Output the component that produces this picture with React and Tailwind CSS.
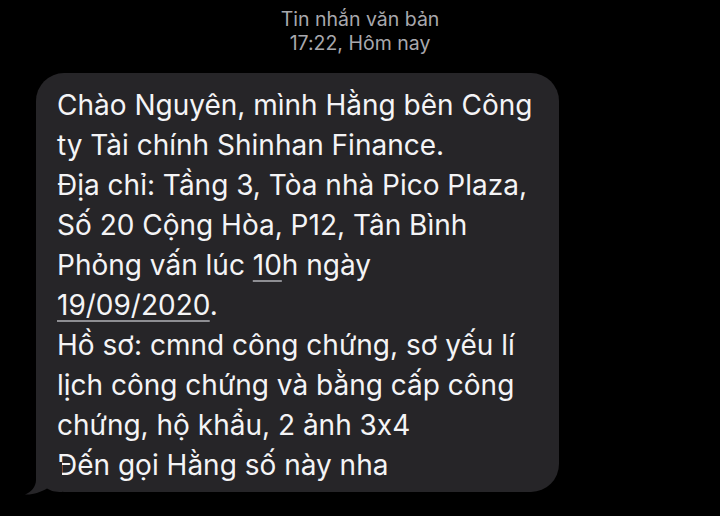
import React from "react";

export default function App() {
  const lines = [
    "Chào Nguyên, mình Hằng bên Công",
    "ty Tài chính Shinhan Finance.",
    "Địa chỉ: Tầng 3, Tòa nhà Pico Plaza,",
    "Số 20 Cộng Hòa, P12, Tân Bình",
  ];
  const lines2 = [
    "Hồ sơ: cmnd công chứng, sơ yếu lí",
    "lịch công chứng và bằng cấp công",
    "chứng, hộ khẩu, 2 ảnh 3x4",
    "Đến gọi Hằng số này nha",
  ];
  const ul = "underline decoration-[#8e8e93] decoration-[1.5px] underline-offset-[5px]";
  return (
    <div
      className="w-[720px] h-[516px] bg-black overflow-hidden [font-feature-settings:'calt'_0]"
      style={{ fontFamily: "Inter, 'Noto Sans', 'Liberation Sans', sans-serif" }}
    >
      <div className="pt-[7px] text-center text-[19.5px] leading-[24px] text-[#a8a8ad]">
        <div>Tin nhắn văn bản</div>
        <div>17:22, Hôm nay</div>
      </div>
      <div className="relative ml-[36px] mt-[18px] w-[523px] rounded-[28px] bg-[#262528] pl-[21px] pt-[12px] pb-[7px] text-[28px] leading-[40px] text-[#f4f4f6]">
        {lines.map((l) => (
          <div key={l} className="whitespace-nowrap">{l}</div>
        ))}
        <div className="whitespace-nowrap">
          Phỏng vấn lúc <span className={ul}>10</span>h ngày
        </div>
        <div className="whitespace-nowrap">
          <span className={ul}>19/09/2020</span>.
        </div>
        {lines2.map((l) => (
          <div key={l} className="whitespace-nowrap">{l}</div>
        ))}
        <svg
          className="absolute left-[-12px] bottom-[-3px]"
          width="50"
          height="40"
          viewBox="24 455 50 40"
        >
          <path
            d="M36,462 L36,480 C36,487 31,492 25,494.5 C33,495 41,492 47,488.5 C51,491 55,492 62,492 L62,462 Z"
            fill="#262528"
          />
        </svg>
      </div>
    </div>
  );
}
